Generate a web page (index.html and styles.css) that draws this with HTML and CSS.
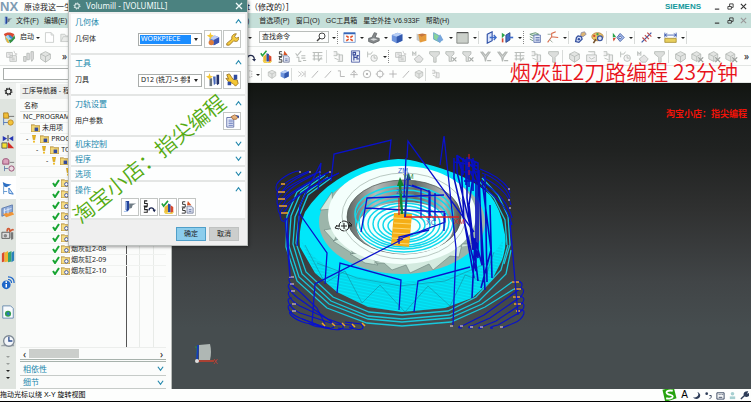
FILE: index.html
```html
<!DOCTYPE html>
<html lang="zh-CN">
<head>
    <meta charset="UTF-8">
    <meta name="viewport" content="width=device-width, initial-scale=1.0">
    <title>NX</title>
    <link rel="stylesheet" href="styles.css">
</head>
<body>
    <!-- Icon definitions -->
    <svg class="defs" aria-hidden="true">
        <symbol id="start" viewBox="0 0 16 16"><circle cx="8" cy="9" r="5" fill="#3d8fd0"/><path d="M3 9a5 5 0 0 1 3-5l2 4 3 2-3 4a5 5 0 0 1-5-5z" fill="#a7d6ef"/><path d="M1 4c3-3 9-3 13 0l-2 4C9 4 5 4 3 7z" fill="#d94a32"/><path d="M14 5l1 4-6 6-2-4 4-1z" fill="#37913f"/><path d="M2 6l3 8 3 1-2-5z" fill="#e6b63a"/></symbol>
        <symbol id="page" viewBox="0 0 16 16"><path d="M3 2h7l3 3v9H3zM10 2v3h3" fill="#fff" stroke="#c4c8c5"/></symbol>
        <symbol id="folder" viewBox="0 0 16 16"><path d="M1 13V4h5l1 2h6v2M1 13l3-6h11l-3 6z" fill="#e9ebe9" stroke="#c4c8c5"/></symbol>
        <symbol id="g-stack" viewBox="0 0 16 16"><path d="M2 3h7v6H2zM6 7h8v7H6zM4 5h3M8 10h4M8 12h4" fill="#eee" stroke="#b9bdba"/><path d="M11 1l1 3 3 1-3 1" fill="none" stroke="#c9c9c9"/></symbol>
        <symbol id="g-tool" viewBox="0 0 16 16"><path d="M2 8h3v6H2zM6 4h3v8H6zM11 2h3v9l-2 3-1-3z" fill="#ddd" stroke="#b3b7b4"/></symbol>
        <symbol id="g-cube" viewBox="0 0 16 16"><path d="M2 5l6-3 6 3v6l-6 4-6-4z" fill="#e2e4e2" stroke="#b3b7b4"/><path d="M2 5l6 3 6-3M8 8v7" fill="none" stroke="#b3b7b4"/></symbol>
        <symbol id="g-cubex" viewBox="0 0 16 16"><path d="M1 5l6-3 5 3v6l-5 3-6-3z" fill="#e2e4e2" stroke="#b3b7b4"/><path d="M1 5l6 3 5-3M7 8v6" fill="none" stroke="#b3b7b4"/><path d="M9 9l6 6M15 9l-6 6" stroke="#9a9e9b" stroke-width="1.5"/></symbol>
        <symbol id="g-funnel" viewBox="0 0 16 16"><path d="M2 2h12v3l-4 4v6H7V9L2 5z" fill="#dcdedc" stroke="#b3b7b4"/></symbol>
        <symbol id="g-funnelx" viewBox="0 0 16 16"><path d="M1 2h10v3L8 8v6H5V8L1 5z" fill="#dcdedc" stroke="#b3b7b4"/><path d="M9 9l5 5M14 9l-5 5" stroke="#a9adaa" stroke-width="1.5"/></symbol>
        <symbol id="g-vee" viewBox="0 0 16 16"><path d="M2 2l5 7 1 5 1-5 5-7M4 2l4 5 4-5M10 13h5" fill="none" stroke="#b3b7b4" stroke-width="1.5"/></symbol>
        <symbol id="g-check" viewBox="0 0 16 16"><path d="M2 4l2 3 5-6M3 9h3v5h3M9 7h5M9 10h5M11 13h4" fill="none" stroke="#b9bdba" stroke-width="1.3"/></symbol>
        <symbol id="g-table" viewBox="0 0 16 16"><path d="M2 3h12M2 7h12M2 11h12M4 3v10M9 3v10M13 9l-4 5" fill="none" stroke="#b9bdba" stroke-width="1.3"/></symbol>
        <symbol id="g-path" viewBox="0 0 16 16"><path d="M2 2h4v5H2M6 5h3v8M9 6h4v8H7" fill="#eee" stroke="#b3b7b4"/><path d="M3 10l5 2" stroke="#b3b7b4"/></symbol>
        <symbol id="g-clock" viewBox="0 0 16 16"><path d="M2 2v7M2 5h4l2-3" fill="none" stroke="#b3b7b4"/><circle cx="10" cy="10" r="4" fill="#f4f4f4" stroke="#b3b7b4"/><path d="M10 7v3h3" fill="none" stroke="#b3b7b4"/></symbol>
        <symbol id="g-box" viewBox="0 0 16 16"><path d="M2 6h12v8H2zM4 2h8v4M5 9l3 2 4-2" fill="#eee" stroke="#b3b7b4"/></symbol>
        <symbol id="g-hand" viewBox="0 0 16 16"><path d="M2 7V2l2 3 2-3v5M4 11l6-5 5 5-3 4H7z" fill="#e4e4e4" stroke="#b3b7b4"/></symbol>
        <symbol id="bluedoc" viewBox="0 0 16 16"><path d="M3 1h10v14H3z" fill="#e9edf8" stroke="#4959a0"/><path d="M5 3h3v3H5zM6 6v7M6 9h4V7h2M9 11h3" fill="none" stroke="#3b4c9b" stroke-width="1.4"/></symbol>
        <symbol id="arc" viewBox="0 0 16 16"><path d="M5 11c1-6 8-6 9 0" fill="none" stroke="#222a4c" stroke-width="1.6"/><path d="M11 11h5l-2 3z" fill="#222a4c"/></symbol>
        <symbol id="verify" viewBox="0 0 16 16"><path d="M4 8l4-3v9l-4 1z" fill="#e9b635"/><path d="M8 4l3 1v9H8z" fill="#2b4da5"/><path d="M11 6l3 2v6l-3 1z" fill="#d8492b"/><path d="M3 12l6 3 6-2-2 3H5z" fill="#f1cf4b"/><path d="M1 4l2 3 5-6" fill="none" stroke="#22a03b" stroke-width="1.8"/></symbol>
        <symbol id="post" viewBox="0 0 16 16"><path d="M6 2H3v3h3v3H2M6 9H3v3h3v3H2" fill="none" stroke="#333" stroke-width="1.1"/><path d="M8 7h5l2 2v6H8z" fill="#dfe4f3" stroke="#77809d"/><path d="M9 1l4 5H8z" fill="#d75426"/><path d="M10 11h3M10 13h3" stroke="#6775a3"/></symbol>
        <symbol id="replay" viewBox="0 0 16 16"><path d="M6 1H3v3h3v3H2M6 8H3v3h3v3H2" fill="none" stroke="#222" stroke-width="1.2"/><path d="M8 12c0-4 5-4 6 0" fill="none" stroke="#1b2550" stroke-width="1.4"/><path d="M12 11h4l-2 3z" fill="#1b2550"/></symbol>
        <symbol id="generate" viewBox="0 0 16 16"><path d="M3 1h4v10l-2 2-2-2z" fill="#24449b"/><path d="M7 4h8l-4 2-1 3-3 1z" fill="#707d86"/><path d="M1 13h4M4 2v9" stroke="#8fb4e8"/></symbol>
        <symbol id="fit" viewBox="0 0 16 16"><path d="M1 2h14v12H1z" fill="#fff" stroke="#6c93ca"/><path d="M1 2h14v2H1z" fill="#3465b8"/><path d="M4 6l3 2M12 6L9 8M4 12l3-2M12 12l-3-2" stroke="#e2552e" stroke-width="2"/></symbol>
        <symbol id="shade" viewBox="0 0 16 16"><path d="M2 9l4-1 3-6 3 1-2 5 5 1v3l-7 3-6-2z" fill="#85898b" stroke="#5f6466"/><path d="M4 10l4-1 5 1-5 2z" fill="#d6d9da"/></symbol>
        <symbol id="cube" viewBox="0 0 16 16"><path d="M1 5l7-3 6 2v8l-7 3-6-3z" fill="#6e94dc"/><path d="M1 5l7-3 6 2-7 3z" fill="#b9cff5"/><path d="M7 7l7-3v8l-7 3z" fill="#3258ad"/></symbol>
        <symbol id="orange" viewBox="0 0 16 16"><path d="M2 3l6 3v8l-6-3z" fill="#c6c8c5"/><path d="M4 4h10v8l-8 2z" fill="#e59b3c"/><path d="M4 4l5-1 5 1-6 3z" fill="#c5773f"/></symbol>
        <symbol id="green" viewBox="0 0 16 16"><path d="M2 2l9 5-1 7-8-4z" fill="#89d59b" stroke="#5d9dc4"/><path d="M10 4l4 7-5 3-3-4z" fill="#76a5dc"/></symbol>
        <symbol id="square" viewBox="0 0 16 16"><path d="M1 2h14v13H1z" fill="#cbd0ca" stroke="#7c807d"/><path d="M1 2h14" stroke="#333"/></symbol>
        <symbol id="clip" viewBox="0 0 16 16"><path d="M4 4l6-3v11l-6 3z" fill="#dbe5fb" stroke="#2d4fa5" stroke-width="1.4"/><path d="M7 8h8M12 5l3 3-3 3" fill="none" stroke="#3d6bc9" stroke-width="1.6"/></symbol>
        <symbol id="clip2" viewBox="0 0 16 16"><path d="M6 5l5-3v9l-5 3z" fill="#4771c8" stroke="#203b83"/><path d="M1 2l4 3-4 4z" fill="#2aa34a"/><path d="M2 9v5" stroke="#d24a32" stroke-width="2"/><path d="M9 8h6" stroke="#3d6bc9" stroke-width="2"/></symbol>
        <symbol id="layers" viewBox="0 0 16 16"><path d="M1 4l7-2 4 2-7 2zM1 7l4 2M1 10l4 2" fill="#c3dec9" stroke="#5f8d70"/><path d="M6 5h8v9H6zM8 8h5M8 10h5M8 12h5" fill="#e5ebf9" stroke="#5169a8"/></symbol>
        <symbol id="axes" viewBox="0 0 16 16"><path d="M2 14l5-7V3l5-2M7 7l8 1" fill="none" stroke="#d86a48" stroke-width="1.3"/><path d="M2 4h4M4 10l4 4" stroke="#8a9c8d"/></symbol>
        <symbol id="gears" viewBox="0 0 16 16"><path d="M9 2l4-1 2 3-4 3-3-1z" fill="#ddb571" stroke="#8a89a3"/><path d="M5 6l4 1 1 3-4 4-4-1 1-5z" fill="#d5def7" stroke="#34509e" stroke-width="1.6"/><circle cx="6" cy="10" r="1.5" fill="#3251a3"/></symbol>
        <symbol id="palette" viewBox="0 0 16 16"><ellipse cx="8" cy="7" rx="7" ry="5" fill="#e9c467" stroke="#b5813c"/><circle cx="4" cy="6" r="1.4" fill="#d5462d"/><circle cx="8" cy="4" r="1.4" fill="#47a04b"/><circle cx="11" cy="9" r="3" fill="#d8e2f6" stroke="#3954a0" stroke-width="1.5"/><path d="M6 10l-3 5" stroke="#74512b" stroke-width="2"/></symbol>
        <symbol id="trigear" viewBox="0 0 16 16"><path d="M1 2l4 5-4 1z" fill="#2aa34a"/><path d="M1 9l4-1-3 5z" fill="#d24a32"/><path d="M10 3l5 5-5 5-4-5z" fill="#a9bfec" stroke="#3954a0"/><circle cx="10" cy="8" r="1.5" fill="#fff" stroke="#3954a0"/></symbol>
        <symbol id="measure" viewBox="0 0 16 16"><path d="M2 14L14 2" stroke="#4059a8" stroke-width="1.5"/><path d="M3 8l5 5M6 5l5 5M9 2l5 5" stroke="#c14b49" stroke-width="1.4"/></symbol>
        <symbol id="ruler" viewBox="0 0 16 16"><path d="M1 9h14v5H1z" fill="#e8cf5c" stroke="#a68e31"/><path d="M1 2v6M15 2v6M1 5h14M4 3L1 5l3 2M12 3l3 2-3 2" fill="none" stroke="#3a59ad"/></symbol>
        <symbol id="geom" viewBox="0 0 16 16"><path d="M4 7l6-3 5 2v6l-6 3-5-2z" fill="#6585d8"/><path d="M4 7l6-3 5 2-6 3z" fill="#bccbf6"/><path d="M9 9l6-3v6l-6 3z" fill="#3c54ae"/><path d="M5 0l1 3 3 1-3 2-1 3-1-3-3-2 3-1z" fill="#f4c634"/><circle cx="6" cy="12" r="3" fill="#dd7b39"/></symbol>
        <symbol id="wrench" viewBox="0 0 16 16"><path d="M2 13l6-5c-1-3 1-6 5-6l-2 3 2 2 3-1c0 4-3 6-6 4l-5 5H2z" fill="#f4ca3d" stroke="#9c7521"/></symbol>
        <symbol id="toolnew" viewBox="0 0 16 16"><path d="M4 6h3v9H4z" fill="#67727e"/><path d="M8 4h3v8l-2 2z" fill="#4868bb"/><path d="M12 2h3v10l-2 2-1-2z" fill="#23336c"/><path d="M4 0l1 3 3 1-3 2-1 2-1-2-3-2 3-1z" fill="#f4c634"/></symbol>
        <symbol id="toolfix" viewBox="0 0 16 16"><path d="M2 2l3-1 4 6 5 1 1 4-3 3-3-3-5-2-3-4 3 1z" fill="#f4c634" stroke="#9c7521"/><path d="M10 2h4v5l-4 1zM3 10h4v4H3z" fill="#2f4b9f"/></symbol>
        <symbol id="listedit" viewBox="0 0 16 16"><path d="M2 4h8v11H2z" fill="#eef2fd" stroke="#5c6ba4"/><path d="M4 7h5M4 9h5M4 11h5M4 13h5" stroke="#6275b9"/><path d="M7 3l4-2 4 2-2 3H9z" fill="#e6b27c" stroke="#a26a3a"/><path d="M12 1l4 1v3z" fill="#354c9a"/></symbol>
        <symbol id="gear" viewBox="0 0 16 16"><circle cx="8" cy="8" r="4.5" fill="none" stroke="currentColor" stroke-width="2"/><circle cx="8" cy="8" r="6" fill="none" stroke="currentColor" stroke-width="2" stroke-dasharray="2.2 2.5"/></symbol>
        <symbol id="s-op" viewBox="0 0 16 16"><path d="M3 1h5l1 6H3z" fill="#f0bd35" stroke="#aa7d1e"/><path d="M3 7v8M3 12h5" stroke="#4d74b9" fill="none"/><circle cx="11" cy="12" r="3" fill="#f3c33b" stroke="#b98722"/><path d="M9 5h6" stroke="#666"/></symbol>
        <symbol id="s-limit" viewBox="0 0 16 16"><path d="M2 1l5 3-5 3zM14 1L9 4l5 3z" fill="#2737b4"/><path d="M8 0v7" stroke="#222"/><path d="M1 9h6v6H1z" fill="#f5e02f" stroke="#555"/><path d="M8 8l7 7H8z" fill="#d22d26"/></symbol>
        <symbol id="s-part" viewBox="0 0 16 16"><path d="M2 3c0-3 7-3 7 0v4H2z" fill="#dba1bb" stroke="#94456c"/><path d="M4 9v6M4 12h4" stroke="#637da9"/><circle cx="12" cy="12" r="3" fill="#eddbe3" stroke="#94456c"/><path d="M10 5h5" stroke="#777"/></symbol>
        <symbol id="s-nav" viewBox="0 0 16 16"><path d="M2 1l4 2 6 1-6 3-3-1z" fill="#2d70c4"/><path d="M3 6v9M3 12h4" stroke="#5a91cb"/><path d="M9 8l5 7-5-1z" fill="#d7e8fb" stroke="#2d70c4"/></symbol>
        <symbol id="s-mach" viewBox="0 0 16 16"><path d="M1 5l12-4v8L1 14z" fill="#8daad9" stroke="#5775a9"/><path d="M2 11l11-2 2 3-9 3z" fill="#ef9436"/><path d="M4 5v6M8 4v7M3 8l9-3" stroke="#dee8f8"/></symbol>
        <symbol id="s-cam" viewBox="0 0 16 16"><path d="M1 6h9v7H1z" fill="#ddd" stroke="#555"/><circle cx="5" cy="10" r="2" fill="#888"/><path d="M7 5c0-4 3-4 3-1s3-3 4 0" fill="none" stroke="#d15a35" stroke-width="2"/><path d="M11 6h3v7l-2 2-1-3z" fill="#777"/></symbol>
        <symbol id="s-books" viewBox="0 0 16 16"><path d="M1 4l3-2v11l-3 1z" fill="#db4a2b"/><path d="M4 3l4-2v12l-4 1z" fill="#f0b431"/><path d="M8 3l4-2v12l-4 1z" fill="#36a56f"/><path d="M12 3l3-2v11l-3 2z" fill="#2b81bb"/></symbol>
        <symbol id="s-info" viewBox="0 0 16 16"><circle cx="6" cy="10" r="5" fill="#1d66c8"/><path d="M6 6v2M6 9v4" stroke="#fff" stroke-width="1.7"/><path d="M8 4c3 0 4 2 4 4M8 1c5 0 7 3 7 7" fill="none" stroke="#1d66c8" stroke-width="1.4"/></symbol>
        <symbol id="s-html" viewBox="0 0 16 16"><path d="M2 1h9l3 3v11H2z" fill="#f7fafd" stroke="#6185ab"/><circle cx="8" cy="10" r="3.5" fill="#2f9e4b"/><path d="M6 9l3-1 1 3-2 1z" fill="#2b75c6"/></symbol>
        <symbol id="s-clock" viewBox="0 0 16 16"><path d="M0 13l5-2 10 1v2H0z" fill="#9ea5aa"/><circle cx="9" cy="8" r="6" fill="#f3f6fa" stroke="#7e8994" stroke-width="1.5"/><path d="M9 3v5h4" fill="none" stroke="#2e4f8f" stroke-width="1.5"/></symbol>
        <symbol id="dir" viewBox="0 0 10 9"><path d="M0 1h4l1 1h5v7H0z" fill="#f2d675" stroke="#b18b36"/><path d="M4 4h4v4H4z" fill="#334a9c"/></symbol>
        <symbol id="opdir" viewBox="0 0 10 9"><path d="M0 1h4l1 1h5v7H0z" fill="#f5dc85" stroke="#b18b36"/><circle cx="6" cy="6" r="2" fill="#fff" stroke="#334a9c"/></symbol>
        <symbol id="tick" viewBox="0 0 8 8"><path d="M1 4l2 3 4-6" fill="none" stroke="#18a532" stroke-width="2"/></symbol>
        <symbol id="bang" viewBox="0 0 8 10"><path d="M2 0h4L5 6H3z" fill="#efb91f" stroke="#b98c14" stroke-width=".6"/><circle cx="4" cy="8.500" r="1.300" fill="#efb91f"/></symbol>
        <symbol id="up" viewBox="0 0 8 8"><path d="M1 6l3-4 3 4" fill="none" stroke="#2187ac" stroke-width="1.3"/></symbol>
        <symbol id="down" viewBox="0 0 8 8"><path d="M1 2l3 4 3-4" fill="none" stroke="#2187ac" stroke-width="1.3"/></symbol>
        <symbol id="close" viewBox="0 0 8 8"><path d="M1 1l6 6M7 1L1 7" stroke="currentColor" stroke-width="1.3"/></symbol>
        <symbol id="min" viewBox="0 0 8 8"><path d="M1 7h5" stroke="currentColor" stroke-width="1.3"/></symbol>
        <symbol id="restore" viewBox="0 0 8 8"><path d="M1 4h4v3H1zM3 4V1h4v4H5" fill="none" stroke="currentColor"/></symbol>
        <symbol id="l-rect" viewBox="0 0 16 16"><path d="M2 3h12v10H2z" fill="none" stroke="#888" stroke-dasharray="2 2"/></symbol>
        <symbol id="l-line" viewBox="0 0 16 16"><path d="M3 14L13 3" stroke="#aaa" stroke-width="1.3"/></symbol>
        <symbol id="l-snap" viewBox="0 0 16 16"><path d="M2 4l5 4-5 4M7 4l5 4-5 4M13 3v10" fill="none" stroke="#aaa"/></symbol>
        <symbol id="l-curve" viewBox="0 0 16 16"><path d="M3 3h4v9h7" fill="none" stroke="#aaa" stroke-width="1.3"/></symbol>
        <symbol id="l-cross" viewBox="0 0 16 16"><path d="M2 9h12M8 2v12M4 7l4-4 4 4" fill="none" stroke="#aaa" stroke-width="1.3"/></symbol>
        <symbol id="l-circ" viewBox="0 0 16 16"><circle cx="8" cy="8" r="6" fill="none" stroke="#aaa" stroke-width="1.3"/><circle cx="8" cy="8" r="1.500" fill="#999"/></symbol>
        <symbol id="l-quad" viewBox="0 0 16 16"><circle cx="8" cy="8" r="5" fill="none" stroke="#aaa" stroke-width="1.3"/><path d="M8 1v4M8 11v4M1 8h4M11 8h4" stroke="#aaa"/></symbol>
        <symbol id="l-plus" viewBox="0 0 16 16"><path d="M2 8h12M8 2v12" stroke="#aaa" stroke-width="1.3"/></symbol>
    </svg>

    <header class="titlebar">
        <strong class="logo">NX</strong>
        <span class="doc-name">原谅我这一生不</span>
        <span class="doc-state">t（修改的）]</span>
        <strong class="brand">SIEMENS</strong>
        <button class="win" aria-label="最小化"><svg><use href="#min"/></svg></button>
        <button class="win" aria-label="还原"><svg><use href="#restore"/></svg></button>
        <button class="win" aria-label="关闭"><svg><use href="#close"/></svg></button>
    </header>

    <nav class="menubar">
        <div class="bar-left">
            <svg class="menu-icon"><use href="#generate"/></svg>
            <button>文件(F)</button><button>编辑(E)</button>
        </div>
        <button class="cut">)</button><button>首选项(P)</button><button>窗口(O)</button><button>GC工具箱</button><button>星空外挂 V6.933F</button><button>帮助(H)</button>
        <span class="spacer"></span>
        <button class="win" aria-label="最小化"><svg><use href="#min"/></svg></button>
        <button class="win" aria-label="还原"><svg><use href="#restore"/></svg></button>
        <button class="win off" aria-label="关闭"><svg><use href="#close"/></svg></button>
    </nav>

    <div class="toolbar">
        <div class="bar-left">
            <button class="start"><svg><use href="#start"/></svg>启动<i class="dd"></i></button>
            <button><svg><use href="#page"/></svg></button>
            <button><svg><use href="#folder"/></svg></button>
        </div>
        <i class="dd lead"></i>
        <label class="finder"><input type="text" value="查找命令" aria-label="查找命令"><svg viewBox="0 0 10 10"><circle cx="6" cy="4" r="3" fill="none" stroke="#444"/><path d="M4 6L1 9" stroke="#444" stroke-width="1.5"/></svg></label>
        <i class="dd"></i><i class="sep dots"></i>
        <button><svg><use href="#fit"/></svg></button><i class="dd"></i>
        <button><svg><use href="#shade"/></svg></button><i class="dd"></i>
        <button><svg><use href="#cube"/></svg></button><i class="dd"></i>
        <button><svg><use href="#orange"/></svg></button>
        <button><svg><use href="#green"/></svg></button><i class="dd"></i>
        <button><svg><use href="#square"/></svg></button><i class="dd"></i><i class="sep"></i>
        <button><svg><use href="#clip"/></svg></button>
        <button><svg><use href="#clip2"/></svg></button><i class="dd"></i><i class="sep dots"></i>
        <button><svg><use href="#layers"/></svg></button>
        <button><svg><use href="#axes"/></svg></button><i class="dd"></i><i class="sep"></i>
        <button><svg><use href="#gears"/></svg></button>
        <button><svg><use href="#palette"/></svg></button><i class="sep"></i>
        <button><svg><use href="#trigear"/></svg></button><i class="dd"></i><i class="sep"></i>
        <button><svg><use href="#measure"/></svg></button><i class="dd"></i>
        <button><svg><use href="#ruler"/></svg></button><i class="dd"></i><i class="sep"></i>
    </div>

    <div class="toolbar">
        <div class="bar-left">
            <button><svg><use href="#g-stack"/></svg></button>
            <button><svg><use href="#g-tool"/></svg></button>
            <button><svg><use href="#g-cube"/></svg></button>
            <span class="more">»</span>
        </div>
        <button><svg><use href="#arc"/></svg></button>
        <button><svg><use href="#verify"/></svg></button>
        <button><svg><use href="#post"/></svg></button>
        <button><svg><use href="#g-check"/></svg></button>
        <button><svg><use href="#g-table"/></svg></button><i class="sep"></i>
        <button><svg><use href="#g-path"/></svg></button>
        <button><svg><use href="#bluedoc"/></svg></button>
        <button><svg><use href="#g-clock"/></svg></button><i class="dd"></i><i class="sep dots"></i>
        <button><svg><use href="#g-stack"/></svg></button>
        <button><svg><use href="#g-hand"/></svg></button>
        <button><svg><use href="#g-funnel"/></svg></button>
        <button><svg><use href="#g-funnelx"/></svg></button>
        <button><svg><use href="#g-funnelx"/></svg></button>
        <button><svg><use href="#g-vee"/></svg></button>
        <button><svg><use href="#g-vee"/></svg></button>
        <button><svg><use href="#g-table"/></svg></button>
        <button><svg><use href="#g-path"/></svg></button>
        <button><svg><use href="#g-funnel"/></svg></button><i class="sep"></i>
        <button><svg><use href="#g-cube"/></svg></button>
        <button><svg><use href="#g-box"/></svg></button>
        <button><svg><use href="#g-path"/></svg></button>
        <button><svg><use href="#g-clock"/></svg></button>
        <button><svg><use href="#g-hand"/></svg></button>
        <button><svg><use href="#g-funnel"/></svg></button><i class="sep"></i>
        <button><svg><use href="#g-cube"/></svg></button>
        <button><svg><use href="#g-cubex"/></svg></button>
        <button><svg><use href="#g-cubex"/></svg></button>
        <button><svg><use href="#g-cubex"/></svg></button>
        <span class="more">»</span>
    </div>

    <div class="toolbar snaps">
        <div class="bar-left"><select class="filter" aria-label="选择过滤器"><option></option></select></div>
        <button><svg><use href="#l-rect"/></svg></button><i class="dd"></i><i class="sep"></i>
        <button><svg><use href="#g-cube"/></svg></button>
        <button><svg><use href="#cube"/></svg></button><i class="sep"></i>
        <button><svg><use href="#l-snap"/></svg></button>
        <button><svg><use href="#l-line"/></svg></button>
        <button><svg><use href="#l-line"/></svg></button>
        <button><svg><use href="#l-curve"/></svg></button>
        <button><svg><use href="#l-cross"/></svg></button>
        <button><svg><use href="#l-circ"/></svg></button>
        <button><svg><use href="#l-quad"/></svg></button>
        <button><svg><use href="#l-plus"/></svg></button>
        <button><svg><use href="#l-line"/></svg></button>
        <button><svg><use href="#g-cube"/></svg></button><i class="sep"></i>
        <button><svg><use href="#g-path"/></svg></button>
    </div>

    <main class="workspace">
        <aside class="resources">
            <button class="settings" aria-label="设置"><svg><use href="#gear"/></svg></button>
            <button><svg><use href="#s-op"/></svg></button>
            <button><svg><use href="#s-limit"/></svg></button>
            <button><svg><use href="#s-part"/></svg></button>
            <button class="active"><svg><use href="#s-nav"/></svg></button>
            <button><svg><use href="#s-mach"/></svg></button>
            <button><svg><use href="#s-cam"/></svg></button>
            <button><svg><use href="#s-books"/></svg></button>
            <button class="tall"><svg><use href="#s-info"/></svg></button>
            <button class="tall"><svg><use href="#s-html"/></svg></button>
            <button class="tall"><svg><use href="#s-clock"/></svg></button>
            <i class="dd up"></i><i class="dd up"></i><i class="dd"></i><i class="dd"></i>
        </aside>

        <!-- Operation navigator -->
        <section class="navigator">
            <h2>工序导航器 - 程</h2>
            <div class="tree">
                <div class="tree-head">名称</div>
                <ul>
                    <li>NC_PROGRAM</li>
                    <li class="lv1"><svg class="fold"><use href="#dir"/></svg>未用项</li>
                    <li class="lv1">-<svg class="mark"><use href="#bang"/></svg><svg class="fold"><use href="#dir"/></svg>PROG</li>
                    <li class="lv2">-<svg class="mark"><use href="#bang"/></svg><svg class="fold"><use href="#dir"/></svg>TO</li>
                    <li class="lv3">-<svg class="mark"><use href="#bang"/></svg><svg class="fold"><use href="#dir"/></svg></li>
                    <li class="lv4"><svg class="mark"><use href="#bang"/></svg></li>
                    <li class="op"><svg class="mark"><use href="#tick"/></svg><svg class="fold"><use href="#opdir"/></svg></li>
                    <li class="op"><svg class="mark"><use href="#tick"/></svg><svg class="fold"><use href="#opdir"/></svg></li>
                    <li class="op"><svg class="mark"><use href="#tick"/></svg><svg class="fold"><use href="#opdir"/></svg></li>
                    <li class="op"><svg class="mark"><use href="#tick"/></svg><svg class="fold"><use href="#opdir"/></svg></li>
                    <li class="op"><svg class="mark"><use href="#tick"/></svg><svg class="fold"><use href="#opdir"/></svg></li>
                    <li class="op"><svg class="mark"><use href="#tick"/></svg><svg class="fold"><use href="#opdir"/></svg></li>
                    <li class="op"><svg class="mark"><use href="#tick"/></svg><svg class="fold"><use href="#opdir"/></svg>烟灰缸2-08</li>
                    <li class="op"><svg class="mark"><use href="#tick"/></svg><svg class="fold"><use href="#opdir"/></svg>烟灰缸2-09</li>
                    <li class="op"><svg class="mark"><use href="#tick"/></svg><svg class="fold"><use href="#opdir"/></svg>烟灰缸2-10</li>
                </ul>
            </div>
            <div class="scroll"><span>‹</span><i class="thumb"></i><span>›</span></div>
            <button class="panel-link">相依性<svg><use href="#down"/></svg></button>
            <button class="panel-link">细节<svg><use href="#down"/></svg></button>
        </section>

        <!-- Part and tool paths -->
        <section class="viewport">
            <svg class="scene" viewBox="172 83 579 306" preserveAspectRatio="xMidYMid slice">
                <defs>
                    <linearGradient id="bore" x1="0" x2="1"><stop offset="0" stop-color="#5d6462"/><stop offset=".25" stop-color="#b4bab7"/><stop offset=".6" stop-color="#646b69"/><stop offset=".85" stop-color="#b0b8b4"/><stop offset="1" stop-color="#4b504e"/></linearGradient>
                    <pattern id="mesh" width="4" height="3" patternUnits="userSpaceOnUse" patternTransform="rotate(12)"><path d="M0 1h4" stroke="#1690a4" stroke-width=".4"/></pattern>
                    <clipPath id="floor"><ellipse cx="405" cy="221" rx="50" ry="33"/></clipPath>
                </defs>

                <!-- offset passes round the body -->
                <g fill="none" stroke="#17c8dc" stroke-width="1.3">
                    <path d="M331 178L308 195 299 217 296 243 306 272 333 297 369 312 402 315 448 311 476 297 501 270 508 245"/>
                    <path d="M328 177L305 194 295 217 293 244 302 274 331 301 368 316 402 319 449 315 479 301 506 274 511 250"/>
                    <path d="M325 175L301 192 291 216 289 246 299 277 329 304 368 319 402 322 450 318 482 304 512 282"/>
                    <path d="M321 175L297 192 287 216 286 247 297 281 327 308 367 323 402 326 451 322 485 307 514 289"/>
                    <path d="M482 178L498 195 508 216 510 245 504 264"/>
                    <path d="M478 180L494 198 505 220 507 245"/>
                </g>
                <g fill="none" stroke="#0710cf" stroke-width="1.1">
                    <path d="M300 171C291 171 276 181 276 187s5 7 8 2C289 181 302 176 309 172"/>
                    <path d="M309 171C295 177 277 185 277 194s6 5 9-1C293 184 307 179 319 172"/>
                    <path d="M319 172C299 180 277 191 277 201s6 6 9-2C297 188 314 181 329 172"/>
                    <path d="M329 172C306 183 278 198 278 208s7 5 10-2C298 194 319 181 339 173"/>
                    <path d="M339 173C311 187 279 204 280 215s8 6 10-3"/>
                    <path d="M293 278C285 276 290 285 297 289L317 308 324 322C328 328 318 329 308 323"/>
                    <path d="M292 284C284 283 290 292 298 298L322 315 333 323C338 329 328 330 318 326"/>
                    <path d="M292 291C284 290 290 301 300 306L328 319 342 324C347 330 337 331 326 328L302 319"/>
                    <path d="M292 298C284 297 289 308 300 313L334 324 351 325C356 330 348 330 338 328"/>
                    <path d="M292 305C284 304 289 314 300 318L326 328M292 312C285 311 294 320 306 323L330 328"/>
                    <path d="M345 322L361 324C367 330 358 331 349 327"/>
                    <path d="M512 282C522 279 526 285 517 291L484 315 464 325C459 326 456 328 462 328"/>
                    <path d="M514 289C527 285 526 294 516 300L490 318 474 325C469 326 466 328 472 328"/>
                    <path d="M514 297C526 294 527 301 517 307L496 321 484 326C479 327 476 329 482 328"/>
                    <path d="M516 304C527 300 526 309 517 314L498 325C491 326 488 329 493 328"/>
                    <path d="M517 311C529 306 524 320 514 323L502 328"/>
                    <path d="M480 169C491 173 501 178 509 189L510 193M482 173C496 178 507 188 510 198M482 177C497 184 509 195 511 205M481 181C498 192 508 202 512 218M481 186C499 198 508 209 512 225"/>
                </g>
                <g fill="none" stroke="#f0a52c" stroke-width="1.5"><path d="M281 184h4M278 192h7M278 199h7M279 206h8M281 213h7M322 323l3 3M332 323l3 3M342 323l3 3M352 324l3 3M362 323l3 3M512 282h7M514 289h7M513 297h7M514 304h7M516 311h4"/></g>
                <g fill="none" stroke="#f1d5dd" stroke-width="1.2"><path d="M289 277h5M290 284h4M291 291h4M292 304h4M292 311h4M299 172h2M309 172h2M319 172h2M329 172h2M450 326h3M460 326h3M470 327h3M480 327h3M500 327h3M508 189h2M508 200h2M509 208h2"/></g>

                <!-- ashtray body -->
                <path d="M398 159Q367 161 337 180Q318 192 305 212Q298 229 300 247L315 273 337 292 368 307 402 312 445 308 472 298 492 280 502 260Q508 243 504 230Q501 209 490 195Q468 174 422 163Q410 159 398 159z" fill="#00e7fa"/>
                <path d="M300 238Q310 260 340 272Q400 292 470 270Q492 260 503 240L502 260 492 280 472 298 445 308 402 312 368 307 337 292 315 273z" fill="url(#mesh)"/>
                <path d="M305 245l20 38 20-12 17 32 18-18 25 27 23-26 22 20 15-31 19 7 10-30M317 263l40 15 43 8 45-5 40-17" fill="none" stroke="#168da0" stroke-width=".6"/>
                <ellipse cx="402" cy="222" rx="83" ry="52" fill="#9cb5aa"/>
                <path d="M320 210l12-18 1 17zM324 230l17-3-7 14zM333 241l12-4 8 17zM350 254l17-2 11 13-13-2zM374 263l10 0 8 7 14-5 4 8 19-9 4 6 17-14 9 1 3-13 14 0" fill="#d3eadf" stroke="#68827a" stroke-width=".6"/>
                <ellipse cx="402" cy="215" rx="74" ry="49" fill="#f4fffc"/>
                <ellipse cx="404" cy="216" rx="62" ry="43" fill="none" stroke="#a9bab3" stroke-width=".8"/>
                <ellipse cx="404" cy="217" rx="57" ry="37" fill="url(#bore)" stroke="#49524e" stroke-width=".7"/>
                <ellipse cx="404" cy="214" rx="49" ry="28" fill="none" stroke="#12dced" stroke-width="1.5"/>
                <ellipse cx="405" cy="228" rx="48" ry="26" fill="#f4fffc"/>
                <g clip-path="url(#floor)" fill="none" stroke="#10d8ec" stroke-width="1.5">
                    <ellipse cx="404" cy="221" rx="49" ry="31"/><ellipse cx="404" cy="222" rx="45" ry="27"/><ellipse cx="404" cy="223" rx="41" ry="24"/><ellipse cx="404" cy="224" rx="36" ry="21"/><ellipse cx="404" cy="224" rx="31" ry="18"/><ellipse cx="404" cy="225" rx="26" ry="15"/><ellipse cx="404" cy="225" rx="21" ry="12"/><ellipse cx="404" cy="226" rx="16" ry="9"/>
                </g>
                <path d="M394 213l18 1-3 33-18-2z" fill="#f5ae16"/>
                <path d="M394 218l17 1M394 223l17 1M393 228l17 1M393 233l17 1M392 238l17 1M392 243l17 1" stroke="#ffe389" stroke-width=".8"/>

                <!-- rapid moves -->
                <g fill="none" stroke="#0a12cc" stroke-width="1.3">
                    <path d="M331 181L334 154 391 140 389 160M285 218L290 277M297 246L300 205 321 163 318 190M299 213L327 253 325 284M287 218L290 277M312 324L315 284 403 239M337 293L340 263 401 280 399 310M414 312L418 281 470 267M407 158L408 141 474 232M440 165L444 136 456 248 453 325M510 222L518 315"/>
                    <path d="M361 232L367 198 444 195M365 208l80 4M406 158l-2 40M397 240l48-18V213M399 244v-7l30-7M408 185l13 4v29M412 185l18 7v26M429 190v30M435 193v28M444 213v18"/>
                </g>
                <g fill="none" stroke="#0710bf" stroke-width="1.6">
                    <path d="M454 158V178L476 271V183L463 158V175L457 155V172L478 258 478 163 467 158V198L473 250M471 160L479 185 485 290M475 162L469 205 478 281M461 162L464 220 474 278M479 170L482 265 475 238 472 298M485 175L487 282M482 180L491 250 481 288M490 205L492 278"/>
                    <path d="M454 162l24 4M458 156l19 14M461 172h18M464 181h15M466 159v26M469 157v30M473 158v33"/>
                </g>
                <path d="M469 154v23" stroke="#d71818" stroke-dasharray="5 3" fill="none"/>
                <path d="M399 198v17M404 217h55" stroke="#e01f1f" stroke-width="1.3"/>
                <path d="M402 214l-2-30" stroke="#11822c" stroke-width="2.500"/><path d="M400 177l-3 9h7z" fill="#11822c"/>
                <path d="M405 217l3-38" stroke="#1530a2" stroke-width="2"/><path d="M408 172l-2 8h5z" fill="#1530a2"/>
                <text x="398" y="173" fill="#3b64cc">ZM</text><text x="403" y="179" fill="#1c8741">YM</text><text x="454" y="224" fill="#cf2a2a">XM</text><text x="396" y="194" fill="#2865c0">ZC</text><text x="426" y="225" fill="#2865c0">XC</text>
                <g fill="none" stroke="#222" stroke-width="1"><circle cx="344" cy="226" r="5" stroke-dasharray="6 1"/><path d="M336 226h4M348 226h4M341 226h6M344 223v6"/><path d="M337 225l-2 3 4 1M349 222l3 3-4 1"/></g>

                <!-- view triad -->
                <path d="M199 345l11-1q2 8 0 16h-11z" fill="#afb7b4"/>
                <path d="M197 360v-13M195 347h2" stroke="#269141"/><path d="M197 361l1-16" stroke="#163cb8" stroke-width="2"/><path d="M198 361h16" stroke="#e03b24" stroke-width="1.3"/><circle cx="197" cy="361" r="2" fill="#ddd"/><text x="213" y="364" fill="#d33c2c">X</text>
            </svg>
            <p class="shop">淘宝小店：指尖编程</p>
        </section>
    </main>

    <footer class="status">
        <span>拖动光标以绕 X-Y 旋转视图</span>
        <div class="ime">
            <svg class="ime-logo" viewBox="0 0 16 16"><path d="M1 3l12-3 3 12-12 4z" fill="#27a30e"/><path d="M12 4C7 3 4 5 6 7s6 1 6 3-4 3-7 2" fill="none" stroke="#fff" stroke-width="2"/></svg>
            <span>A</span>
            <svg viewBox="0 0 10 10"><path d="M6 1c3 4-1 7-5 6 3 4 9 1 8-3-1-2-2-3-3-3z" fill="#2d3c57"/></svg>
            <svg viewBox="0 0 10 10"><circle cx="3" cy="3" r="1.500" fill="#2d3c57"/><path d="M6 5h2v2L6 9" fill="none" stroke="#2d3c57"/></svg>
            <svg viewBox="0 0 10 10"><path d="M1 2h8v7H1zM3 4h1M5 4h1M7 4h1M3 7h4" fill="none" stroke="#2d3c57"/></svg>
            <svg viewBox="0 0 10 10"><circle cx="5" cy="3" r="2" fill="#a6cfd0"/><path d="M2 6h6v3H2z" fill="#a6cfd0"/></svg>
            <svg viewBox="0 0 10 10"><path d="M1 9l4-4M5 5c-1-3 1-4 3-4L7 3l1 1 2-1c0 2-2 4-5 2z" fill="#2d3c57" stroke="#2d3c57" stroke-width="1.500"/></svg>
        </div>
    </footer>

    <!-- Volumill dialog -->
    <form class="dialog">
        <header>
            <svg><use href="#gear"/></svg>
            <h1>Volumill - [VOLUMILL]</h1>
            <button type="button" aria-label="关闭"><svg><use href="#close"/></svg></button>
        </header>
        <fieldset>
            <h3>几何体<svg><use href="#up"/></svg></h3>
            <div class="field">
                <label for="geometry">几何体</label>
                <span class="combo picked"><select id="geometry"><option>WORKPIECE</option></select></span>
                <button type="button" class="box" aria-label="新建几何体"><svg><use href="#geom"/></svg></button>
                <button type="button" class="box" aria-label="编辑几何体"><svg><use href="#wrench"/></svg></button>
            </div>
        </fieldset>
        <fieldset>
            <h3>工具<svg><use href="#up"/></svg></h3>
            <div class="field">
                <label for="cutter">刀具</label>
                <span class="combo"><select id="cutter"><option>D12 (铣刀-5 参数)</option></select></span>
                <button type="button" class="box" aria-label="新建刀具"><svg><use href="#toolnew"/></svg></button>
                <button type="button" class="box" aria-label="编辑刀具"><svg><use href="#toolfix"/></svg></button>
            </div>
        </fieldset>
        <fieldset>
            <h3>刀轨设置<svg><use href="#up"/></svg></h3>
            <div class="field">
                <label for="params">用户参数</label>
                <button type="button" class="box" id="params"><svg><use href="#listedit"/></svg></button>
            </div>
        </fieldset>
        <fieldset class="closed"><h3>机床控制<svg><use href="#down"/></svg></h3></fieldset>
        <fieldset class="closed"><h3>程序<svg><use href="#down"/></svg></h3></fieldset>
        <fieldset class="closed"><h3>选项<svg><use href="#down"/></svg></h3></fieldset>
        <fieldset class="actions">
            <h3>操作<svg><use href="#up"/></svg></h3>
            <div class="field">
                <button type="button" class="box" aria-label="生成"><svg><use href="#generate"/></svg></button>
                <button type="button" class="box" aria-label="重播"><svg><use href="#replay"/></svg></button>
                <button type="button" class="box" aria-label="确认"><svg><use href="#verify"/></svg></button>
                <button type="button" class="box" aria-label="列表"><svg><use href="#post"/></svg></button>
            </div>
        </fieldset>
        <div class="buttons">
            <button type="button" class="ok">确定</button>
            <button type="button">取消</button>
        </div>
    </form>

    <p class="caption">烟灰缸2刀路编程 23分钟</p>
    <p class="watermark">淘宝小店：指尖编程</p>
</body>
</html>
```

FILE: styles.css
```css
* {
    box-sizing: border-box;
}
body {
    margin: 0;
    height: 100vh;
    display: flex;
    flex-direction: column;
    position: relative;
    overflow: hidden;
    background: #fdfefd;
    border-bottom: 1px solid #000;
    font-family: "Noto Sans", "Noto Sans CJK SC", sans-serif;
    font-size: 7px;
    line-height: 10px;
    color: #222;
}
h1, h2, h3, p, ul, fieldset {
    margin: 0;
    padding: 0;
    border: 0;
    font-weight: normal;
}
fieldset {
    min-width: 0;
}
button, select, input {
    font: inherit;
    color: inherit;
    margin: 0;
    padding: 0;
    border: 0;
    background: none;
}
button svg {
    display: block;
}
.defs {
    display: none;
}
.spacer {
    flex: 1;
}

/* Title and menu */
.titlebar {
    display: flex;
    align-items: center;
    height: 13px;
    padding-right: 1px;
    flex: none;
}
.logo {
    width: 24px;
    font-family: "Liberation Sans", sans-serif;
    font-size: 13px;
    color: #7f9cb2;
}
.doc-name {
    width: 223px;
    font-size: 8px;
}
.doc-state {
    flex: 1;
    font-size: 8px;
}
.brand {
    margin-right: 10px;
    font-family: "Liberation Sans", sans-serif;
    font-size: 8px;
    color: #12989b;
}
.win {
    width: 13px;
    height: 10px;
    color: #333;
}
.win svg {
    width: 7px;
    height: 7px;
    margin: 1px auto;
}
.off {
    color: #999;
}
.menubar {
    display: flex;
    align-items: center;
    height: 15px;
    padding-right: 1px;
    flex: none;
    gap: 6px;
    background: #c5dfd9;
    font-family: "Liberation Sans", "Noto Sans CJK SC", sans-serif;
}
.menubar .win {
    margin-left: -6px;
}
.menubar .cut {
    margin-right: 4px;
}
.menu-icon {
    width: 10px;
    height: 10px;
}
.bar-left {
    display: flex;
    align-items: center;
    width: 241px;
    padding-left: 3px;
    flex: none;
}
.menubar .bar-left {
    gap: 3px;
}
.menubar .bar-left button {
    margin-right: 2px;
}

/* Tool bars */
.toolbar {
    display: flex;
    align-items: center;
    height: 19px;
    flex: none;
    border-bottom: 1px solid #e3e6e4;
}
.toolbar button {
    width: 17px;
    flex: none;
}
.toolbar button svg {
    width: 13px;
    height: 13px;
    margin: 0 auto;
}
.toolbar .start {
    display: flex;
    align-items: center;
    width: 38px;
    white-space: nowrap;
}
.toolbar .start svg {
    margin: 0 4px 0 0;
}
.dd {
    width: 7px;
    flex: none;
}
.dd::after {
    content: "";
    display: block;
    margin: 1px auto 0;
    width: 0;
    border: 2px solid transparent;
    border-top-color: #222;
    border-bottom: 0;
}
.sep {
    width: 4px;
    height: 13px;
    flex: none;
    border-left: 1px solid #d8dbd9;
}
.dots {
    border-left: 1px dotted #888;
}
.lead {
    width: 18px;
}
.finder {
    display: flex;
    align-items: center;
    width: 70px;
    height: 12px;
    margin-right: 1px;
    padding: 0 2px;
    flex: none;
    border: 1px solid #b9bdba;
}
.finder input {
    width: 54px;
    height: 10px;
}
.finder svg {
    width: 10px;
    height: 10px;
}
.more {
    margin-left: auto;
    width: 7px;
    font-size: 10px;
}
.bar-left .more {
    margin-left: 8px;
}
.snaps {
    height: 17px;
}
.snaps button {
    width: 13px;
}
.snaps button svg {
    width: 10px;
    height: 10px;
}
.filter {
    appearance: none;
    width: 120px;
    height: 12px;
    border: 1px solid #aaaeac;
    background: #fff;
}

/* Workspace */
.workspace {
    display: flex;
    flex: 1;
    min-height: 0;
}
.resources {
    width: 16px;
    flex: none;
    display: flex;
    flex-direction: column;
    align-items: center;
    background: #dfe4df;
    overflow: hidden;
}
.resources button {
    width: 16px;
    height: 23px;
    flex: none;
}
.resources button svg {
    width: 14px;
    height: 14px;
    margin: 0 auto;
}
.resources .settings {
    height: 16px;
    margin-bottom: 8px;
    background: #eef0ee;
}
.resources .settings svg {
    width: 9px;
    height: 9px;
}
.resources .active {
    background: #fff;
}
.resources .tall {
    height: 29px;
}
.resources .dd {
    height: 7px;
}
.resources .up::after {
    border-top-color: #9a9e9b;
}
.navigator {
    width: 156px;
    flex: none;
    display: flex;
    flex-direction: column;
    padding: 1px 5px 0 4px;
    background: #fbfcfb;
    border-right: 1px solid #b8bcb9;
}
.navigator h2 {
    height: 15px;
    padding: 2px 0 0 2px;
    font-size: 7px;
    white-space: nowrap;
    background: #eef0ee;
}
.tree {
    flex: 1;
    min-height: 0;
    overflow: hidden;
    background: linear-gradient(#555, #555) no-repeat 106px 0 / 1px 100%,
        linear-gradient(#e8ebe8, #e8ebe8) no-repeat 119px 0 / 1px 100%,
        linear-gradient(#e8ebe8, #e8ebe8) no-repeat 133px 0 / 1px 100%;
}
.tree-head {
    height: 13px;
    padding: 2px 4px;
    border-bottom: 1px solid #dcdfdc;
}
.tree ul {
    list-style: none;
}
.tree li {
    display: flex;
    align-items: center;
    gap: 2px;
    height: 11px;
    padding-left: 3px;
    border-bottom: 1px solid #f0f2f0;
    white-space: nowrap;
}
.tree .lv1 {
    padding-left: 6px;
}
.tree li.lv1:nth-child(2) {
    padding-left: 11px;
}
.tree .lv2 {
    padding-left: 16px;
}
.tree .lv3 {
    padding-left: 26px;
}
.tree .lv4 {
    padding-left: 44px;
}
.tree .op {
    gap: 1px;
    padding-left: 32px;
}
.mark {
    width: 8px;
    height: 8px;
    flex: none;
}
.fold {
    width: 9px;
    height: 8px;
    flex: none;
}
.scroll {
    display: flex;
    align-items: center;
    height: 12px;
    padding: 0 3px;
    border-top: 1px solid #eceeec;
    font-size: 10px;
}
.scroll .thumb {
    width: 50px;
    height: 9px;
    margin: 0 auto 0 3px;
    background: #cbcecb;
}
.panel-link {
    display: flex;
    align-items: center;
    justify-content: space-between;
    height: 13px;
    padding: 0 2px 0 3px;
    border-bottom: 1px solid #c6cbc8;
    font-size: 8px;
    color: #2187ac;
}
.scroll + .panel-link {
    height: 17px;
    border-top: 3px double #a7b2ac;
}
.panel-link svg {
    width: 7px;
    height: 7px;
}
.viewport {
    position: relative;
    flex: 1;
    min-width: 0;
    background: linear-gradient(#121511, #191c1b 9%, #202221 22%, #303131 42%, #414547 65%, #464d4f 80%);
}
.scene {
    display: block;
    width: 100%;
    height: 100%;
}
.scene text {
    font-family: "Liberation Sans", sans-serif;
    font-size: 7px;
}
.shop {
    position: absolute;
    top: 26px;
    right: 4px;
    font-family: "Liberation Serif", "Noto Sans CJK SC", sans-serif;
    font-size: 9px;
    font-weight: bold;
    color: #f01208;
}

/* Status line */
.status {
    display: flex;
    align-items: center;
    justify-content: space-between;
    height: 12px;
    flex: none;
    font-family: "Liberation Sans", "Noto Sans CJK SC", sans-serif;
    color: #000;
}
.ime {
    display: flex;
    align-items: center;
    gap: 3px;
    padding-right: 2px;
    font-size: 10px;
}
.ime span {
    width: 9px;
    text-align: center;
}
.ime svg {
    width: 9px;
    height: 9px;
}
.ime .ime-logo {
    width: 16px;
    height: 15px;
    margin-top: -2px;
}

/* Dialog */
.dialog {
    position: absolute;
    top: 0;
    left: 68px;
    width: 180px;
    background: #efefef;
    border: 1px solid #bcc0be;
    border-top: 0;
    box-shadow: 1px 1px 3px #0006;
}
.dialog header {
    display: flex;
    align-items: center;
    gap: 5px;
    height: 12px;
    margin-bottom: 2px;
    padding: 0 4px;
    background: #4b8280;
    color: #f2fbfa;
}
.dialog header svg {
    width: 8px;
    height: 8px;
}
.dialog h1 {
    flex: 1;
    font-size: 8px;
}
.dialog fieldset {
    margin: 0 2px;
    padding-bottom: 4px;
    background: #fdfefe;
    border-bottom: 2px solid #e4e6e5;
}
.dialog h3 {
    display: flex;
    align-items: center;
    justify-content: space-between;
    height: 15px;
    padding: 0 3px 0 4px;
    font-size: 8px;
    color: #2187ac;
}
.dialog h3 svg {
    width: 7px;
    height: 7px;
}
.field {
    display: flex;
    align-items: center;
    justify-content: flex-end;
    gap: 1px;
    height: 20px;
    padding: 0 4px;
}
.field label {
    margin-right: auto;
}
.combo {
    position: relative;
    width: 64px;
    margin-right: 1px;
}
.combo select {
    appearance: none;
    display: block;
    width: 100%;
    height: 13px;
    padding: 0 11px 0 2px;
    border: 1px solid #a9adab;
    background: #fff;
}
.combo::after {
    content: "";
    position: absolute;
    top: 5px;
    right: 4px;
    border: 2px solid transparent;
    border-top: 3px solid #222;
    border-bottom: 0;
}
.picked select {
    color: #fff;
    background: linear-gradient(#1b8dff, #1b8dff) no-repeat 1px 1px / 51px 9px #fff;
}
.box {
    width: 18px;
    height: 18px;
    border: 1px solid #c3c6c4;
    background: #fff;
}
.box svg {
    width: 14px;
    height: 14px;
    margin: 0 auto;
}
.dialog .closed {
    padding: 0;
}
.closed h3 {
    height: 13px;
}
.dialog .actions {
    padding-bottom: 1px;
}
.actions .field {
    justify-content: center;
    padding-left: 0;
    padding-right: 0;
    margin-left: 1px;
}
.buttons {
    display: flex;
    justify-content: flex-end;
    gap: 3px;
    padding: 7px 8px 4px;
}
.buttons button {
    width: 30px;
    height: 14px;
    background: #cccecd;
    border: 1px solid #c0c2c1;
}
.buttons .ok {
    background: #8ccdec;
    border-color: #4f9fc9;
}

/* Overlay texts */
.caption {
    position: absolute;
    top: 57px;
    right: 13px;
    font-family: "Noto Sans CJK SC", sans-serif;
    font-size: 21px;
    font-weight: 350;
    line-height: 28px;
    color: #e8121a;
}
.watermark {
    position: absolute;
    top: 144px;
    left: 54px;
    font-family: "Noto Sans CJK TC", sans-serif;
    font-size: 21px;
    font-weight: 350;
    line-height: 28px;
    color: #55ab12;
    white-space: nowrap;
    transform: rotate(-39deg);
}
```
